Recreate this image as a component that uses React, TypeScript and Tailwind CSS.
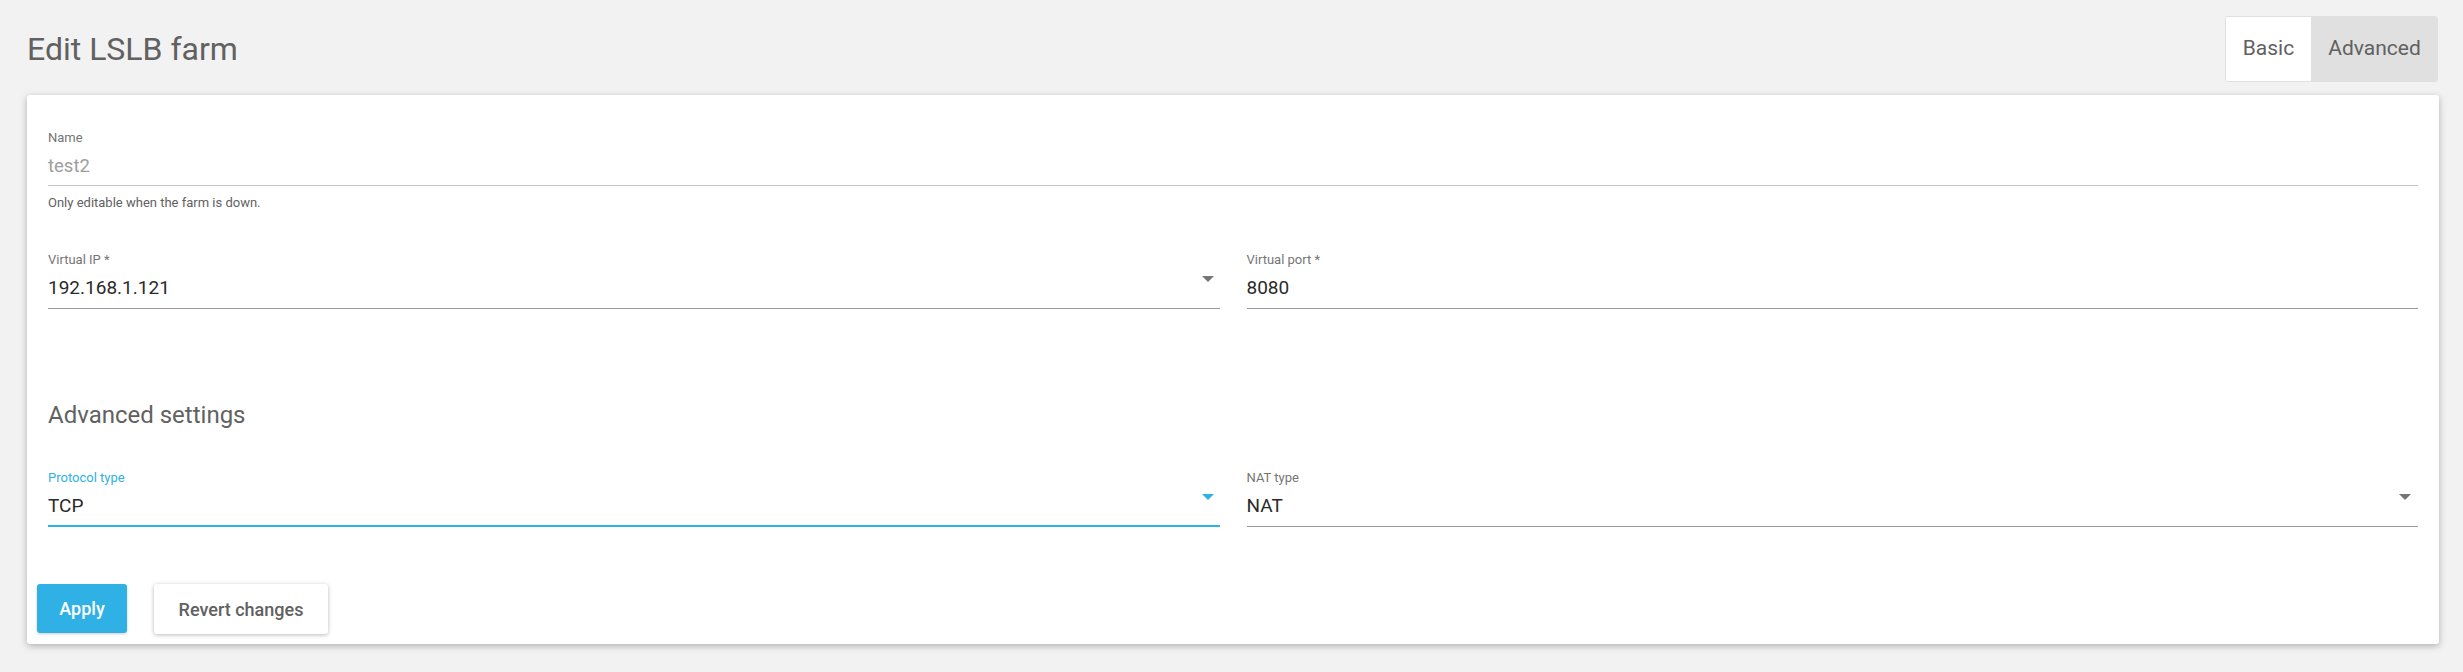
export default function App() {
  return (
    <div className="h-[672px] w-full bg-[#f2f2f2] font-['Roboto',sans-serif]">
      <div className="flex items-center justify-between pl-[27px] pr-[25px] pt-[16px]">
        <h1 className="text-[32px] leading-[40px] text-[#616161]">Edit LSLB farm</h1>
        <div className="flex h-[66px] overflow-hidden rounded-[3px] border border-[#e0e0e0]">
          <button className="w-[85px] bg-white text-[21px] text-[#616161]">Basic</button>
          <button className="w-[126px] border-l border-[#e0e0e0] bg-[#e0e0e0] text-[21px] text-[#616161]">Advanced</button>
        </div>
      </div>

      <div className="ml-[27px] mr-[24px] mt-[13px] h-[549px] rounded-[3px] bg-white shadow-[0_2px_7px_rgba(0,0,0,0.28)]">
        <div className="px-[21px] pt-[35px]">
          {/* Name */}
          <div>
            <div className="border-b border-[#c4c4c4] pb-[7px]">
              <div className="text-[13px] leading-[16px] text-[#757575]">Name</div>
              <div className="mt-[8px] text-[18.5px] leading-[24px] text-[#9e9e9e]">test2</div>
            </div>
            <div className="mt-[9px] text-[13px] leading-[16px] text-[#616161]">Only editable when the farm is down.</div>
          </div>

          {/* Virtual IP / port */}
          <div className="mt-[41px] grid grid-cols-2 gap-[27px]">
            <div className="border-b border-[#9a9a9a] pb-[8px]">
              <div className="text-[13px] leading-[16px] text-[#757575]">Virtual IP *</div>
              <div className="mt-[8px] flex items-start justify-between">
                <span className="text-[19px] leading-[24px] text-[#2a2a2a]">192.168.1.121</span>
                <span className="mr-[6px] h-0 w-0 border-x-[6px] border-t-[6px] border-x-transparent border-t-[#757575]" />
              </div>
            </div>
            <div className="border-b border-[#9a9a9a] pb-[8px]">
              <div className="text-[13px] leading-[16px] text-[#757575]">Virtual port *</div>
              <div className="mt-[8px] text-[19px] leading-[24px] text-[#2a2a2a]">8080</div>
            </div>
          </div>

          <h2 className="mt-[90px] text-[24px] leading-[32px] text-[#616161]">Advanced settings</h2>

          {/* Protocol / NAT */}
          <div className="mt-[39px] grid grid-cols-2 gap-[27px]">
            <div className="border-b-2 border-[#2fb1e5] pb-[7px]">
              <div className="text-[13px] leading-[16px] text-[#2fb1e5]">Protocol type</div>
              <div className="mt-[8px] flex items-start justify-between">
                <span className="text-[19px] leading-[24px] text-[#2a2a2a]">TCP</span>
                <span className="mr-[6px] h-0 w-0 border-x-[6px] border-t-[6px] border-x-transparent border-t-[#2fb1e5]" />
              </div>
            </div>
            <div className="border-b border-[#9a9a9a] pb-[8px]">
              <div className="text-[13px] leading-[16px] text-[#757575]">NAT type</div>
              <div className="mt-[8px] flex items-start justify-between">
                <span className="text-[19px] leading-[24px] text-[#2a2a2a]">NAT</span>
                <span className="mr-[7px] h-0 w-0 border-x-[6px] border-t-[6px] border-x-transparent border-t-[#757575]" />
              </div>
            </div>
          </div>
        </div>

        {/* Buttons */}
        <div className="mt-[57px] flex gap-[27px] px-[10px]">
          <button className="h-[49px] w-[90px] rounded-[3px] bg-[#2fb1e5] text-[18px] font-medium text-white shadow-[0_1px_3px_rgba(0,0,0,0.2)]">
            Apply
          </button>
          <button className="h-[50px] w-[174px] rounded-[3px] bg-white text-[18px] font-medium text-[#616161] shadow-[0_1px_4px_rgba(0,0,0,0.28)]">
            Revert changes
          </button>
        </div>
      </div>
    </div>
  );
}
